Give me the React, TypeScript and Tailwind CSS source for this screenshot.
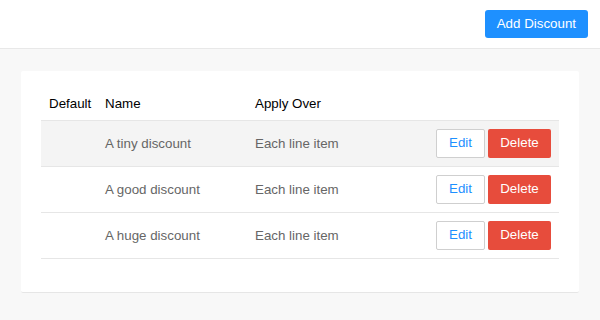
const discounts = [
  { id: 1, name: "A tiny discount", applyOver: "Each line item" },
  { id: 2, name: "A good discount", applyOver: "Each line item" },
  { id: 3, name: "A huge discount", applyOver: "Each line item" },
];

export default function App() {
  return (
    <div className="min-h-[320px] bg-[#f8f8f8] font-['Liberation_Sans',Arial,sans-serif] text-[13.33px]">
      <header className="flex h-[49px] items-center justify-end border-b border-[#e8e8e8] bg-white pr-[12px]">
        <button className="h-[28px] rounded-[3px] bg-[#1e90ff] px-[12px] text-white">
          Add Discount
        </button>
      </header>

      <main className="px-[21px] pt-[22px]">
        <div className="rounded-[2px] border-b border-[#e6e6e6] bg-white px-[20px] pb-[33px] pt-[8px]">
          <div className="grid grid-cols-[56px_150px_1fr_auto] items-center border-b border-[#e6e6e6] text-black">
            <div className="pb-[6px] pl-[8px] pt-[15px]">Default</div>
            <div className="pb-[6px] pl-[8px] pt-[15px]">Name</div>
            <div className="pb-[6px] pl-[8px] pt-[15px]">Apply Over</div>
            <div />
          </div>

          {discounts.map((d, i) => (
            <div
              key={d.id}
              className={
                "grid h-[46px] grid-cols-[56px_150px_1fr_auto] items-center border-b border-[#e6e6e6] text-[#666] " +
                (i === 0 ? "bg-[#f4f4f4]" : "bg-white")
              }
            >
              <div />
              <div className="pl-[8px] pt-[1px]">{d.name}</div>
              <div className="pl-[8px] pt-[1px]">{d.applyOver}</div>
              <div className="flex gap-[3px] pr-[8px]">
                <button className="h-[29px] w-[49px] rounded-[2px] border border-[#cfcfcf] bg-white text-[#1e90ff]">
                  Edit
                </button>
                <button className="h-[29px] w-[63px] rounded-[2px] bg-[#e74c3c] text-white">
                  Delete
                </button>
              </div>
            </div>
          ))}
        </div>
      </main>
    </div>
  );
}
